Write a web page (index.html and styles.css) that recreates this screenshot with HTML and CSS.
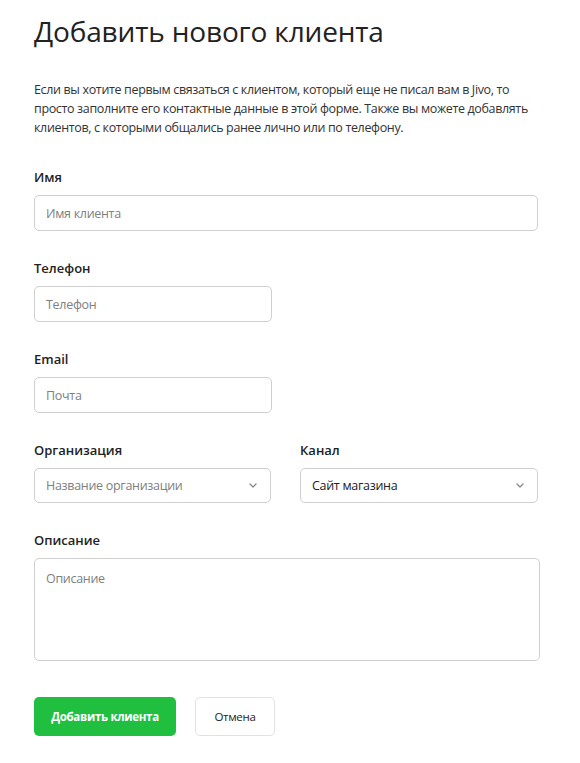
FILE: index.html
```html
<!DOCTYPE html>
<html lang="ru">
<head>
<meta charset="utf-8">
<title>Добавить нового клиента</title>
<link rel="stylesheet" href="styles.css">
</head>
<body>
<main class="page">
  <h1 class="title">Добавить нового клиента</h1>
  <p class="intro">Если вы хотите первым связаться с клиентом, который еще не писал вам в Jivo, то просто заполните его контактные данные в этой форме. Также вы можете добавлять клиентов, с которыми общались ранее лично или по телефону.</p>

  <form class="form">
    <div class="field">
      <label class="label">Имя</label>
      <div class="input input-wide"><span class="placeholder">Имя клиента</span></div>
    </div>
    <div class="field">
      <label class="label">Телефон</label>
      <div class="input input-half"><span class="placeholder">Телефон</span></div>
    </div>
    <div class="field">
      <label class="label">Email</label>
      <div class="input input-half"><span class="placeholder">Почта</span></div>
    </div>
    <div class="row">
      <div class="field col col-left">
        <label class="label">Организация</label>
        <div class="input select"><span class="placeholder">Название организации</span>
          <svg class="chev" width="8" height="5" viewBox="0 0 8 5"><path d="M1 1 L4 4 L7 1" fill="none" stroke="#8a8a8a" stroke-width="1.3" stroke-linecap="round" stroke-linejoin="round"/></svg>
        </div>
      </div>
      <div class="field col">
        <label class="label">Канал</label>
        <div class="input select"><span class="value">Сайт магазина</span>
          <svg class="chev" width="8" height="5" viewBox="0 0 8 5"><path d="M1 1 L4 4 L7 1" fill="none" stroke="#8a8a8a" stroke-width="1.3" stroke-linecap="round" stroke-linejoin="round"/></svg>
        </div>
      </div>
    </div>
    <div class="field">
      <label class="label">Описание</label>
      <div class="textarea"><span class="placeholder">Описание</span></div>
    </div>
    <div class="actions">
      <button type="button" class="btn btn-primary">Добавить клиента</button>
      <button type="button" class="btn btn-secondary">Отмена</button>
    </div>
  </form>
</main>
</body>
</html>
```
FILE: styles.css
```css
html, body {
  margin: 0;
  padding: 0;
  background: #fff;
}
body {
  font-family: "Open Sans", "Noto Sans", "Liberation Sans", sans-serif;
  color: #222;
}
.page {
  padding: 13px 34px 20px 34px;
}
.title {
  margin: 0;
  font-size: 28px;
  line-height: 36px;
  font-weight: 400;
  color: #222;
  letter-spacing: -0.15px;
}
.intro {
  margin: 31px 0 0 0;
  max-width: 510px;
  font-size: 12.5px;
  line-height: 19px;
  color: #333;
  letter-spacing: -0.35px;
}
.form {
  margin-top: 31px;
  display: flex;
  flex-direction: column;
}
.field {
  display: flex;
  flex-direction: column;
  margin-bottom: 28px;
}
.label {
  font-size: 13px;
  line-height: 18px;
  font-weight: 600;
  color: #222;
  margin-bottom: 9px;
}
.input {
  box-sizing: border-box;
  height: 36px;
  border: 1px solid #cfcfcf;
  border-radius: 5px;
  display: flex;
  align-items: center;
  padding: 0 13px 0 11px;
  font-size: 12.5px;
  letter-spacing: -0.3px;
}
.input-wide {
  width: 504px;
}
.input-half {
  width: 238px;
}
.placeholder {
  color: #808080;
}
.value {
  color: #222;
}
.row {
  display: flex;
  gap: 29px;
}
.col {
  width: 238px;
}
.col-left {
  width: 237px;
}
.select {
  justify-content: space-between;
  height: 35px;
}
.textarea {
  box-sizing: border-box;
  width: 506px;
  height: 103px;
  border: 1px solid #cfcfcf;
  border-radius: 5px;
  padding: 12px 11px;
  font-size: 12.5px;
  line-height: 16px;
  letter-spacing: -0.3px;
}
.actions {
  display: flex;
  gap: 19px;
  margin-top: 8px;
}
.btn {
  box-sizing: border-box;
  height: 39px;
  border-radius: 5px;
  font-family: "Open Sans", "Noto Sans", "Liberation Sans", sans-serif;
  font-size: 11.5px;
  letter-spacing: -0.3px;
  cursor: pointer;
  padding: 0;
}
.btn-primary {
  width: 142px;
  background: #20bf3f;
  border: none;
  color: #fff;
  font-weight: 700;
}
.btn-secondary {
  width: 80px;
  background: #fff;
  border: 1px solid #e2e2e2;
  color: #222;
  font-weight: 400;
}
```
